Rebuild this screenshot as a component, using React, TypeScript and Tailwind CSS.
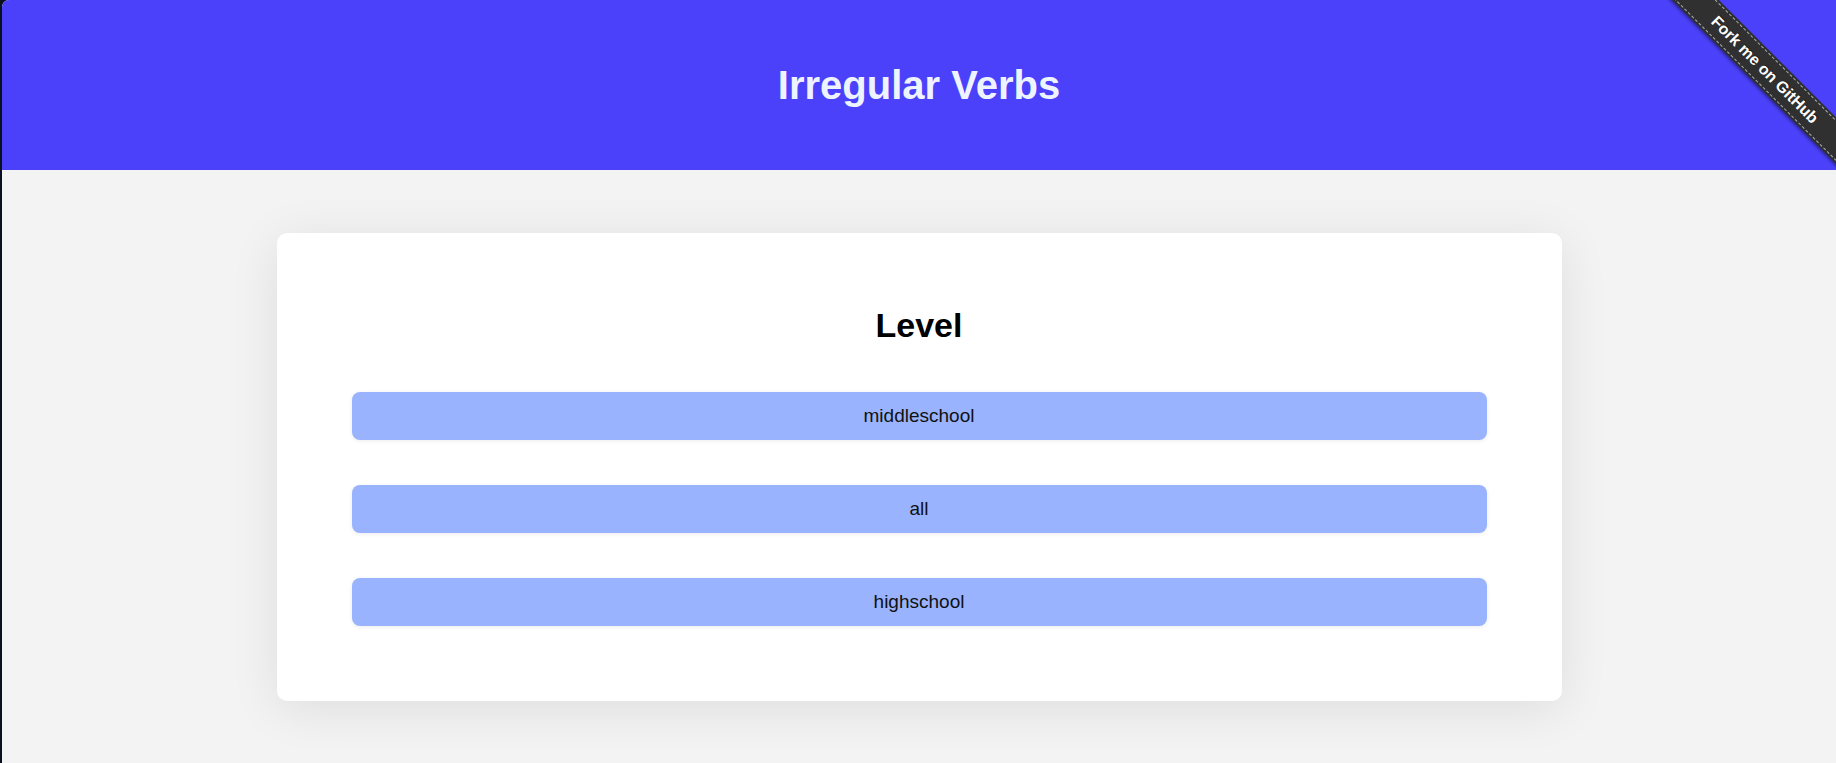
import React from "react";

export default function App() {
  const levels = ["middleschool", "all", "highschool"];
  return (
    <div className="min-h-screen bg-[#0b1020] pl-[2px]" style={{ fontFamily: '"Liberation Sans", Arial, sans-serif' }}>
      <div className="relative min-h-screen overflow-hidden rounded-tl-[7px] bg-[#f3f3f3]">
        <header className="flex h-[170px] items-center justify-center bg-[#4b41fa]">
          <h1 className="text-[40px] font-bold leading-[46px] text-[#eef4ff]">Irregular Verbs</h1>
        </header>

        <div className="absolute right-0 top-0 h-[170px] w-[170px] overflow-hidden">
          <div className="absolute left-[-26px] top-[53px] flex h-[33px] w-[250px] rotate-45 items-center justify-center bg-[#303030] shadow-[0_2px_3px_rgba(0,0,0,0.4)]">
            <div className="absolute inset-x-0 top-[2px] border-t border-dashed border-white/60" />
            <div className="absolute inset-x-0 bottom-[2px] border-b border-dashed border-white/60" />
            <span className="text-[16px] font-bold text-white [text-shadow:0_-1px_0_rgba(0,0,0,0.6)]">Fork me on GitHub</span>
          </div>
        </div>

        <main className="flex justify-center pt-[63px] pb-[62px]">
          <section className="w-[1285px] rounded-[10px] bg-white px-[75px] pb-[75px] pt-[74px] shadow-[0_8px_50px_rgba(0,0,0,0.09)]">
            <h2 className="mb-[48px] text-center text-[34px] font-bold leading-[37px] text-black">Level</h2>
            <div className="flex flex-col gap-[45px]">
              {levels.map((l) => (
                <button
                  key={l}
                  className="h-[48px] w-full rounded-[8px] bg-[#99b3ff] text-[19px] text-[#111] shadow-[0_1px_4px_rgba(0,0,0,0.08)]"
                >
                  {l}
                </button>
              ))}
            </div>
          </section>
        </main>
      </div>
    </div>
  );
}
